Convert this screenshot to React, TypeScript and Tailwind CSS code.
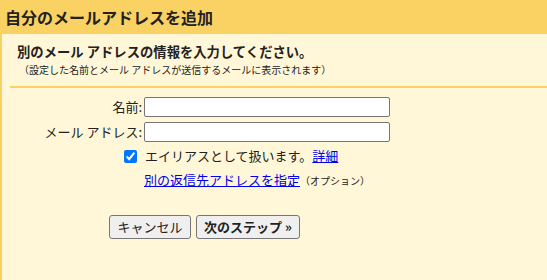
import React from "react";

const font = { fontFamily: '"Noto Sans CJK JP", "Noto Sans", sans-serif' };

export default function App() {
  return (
    <div className="w-[547px] h-[280px] bg-[#fff7d7] text-[#222] overflow-hidden" style={font}>
      <div className="h-[34px] bg-[#fad163] flex items-center pl-[5px]">
        <h1 className="text-[16px] font-bold text-[#222] leading-none">自分のメールアドレスを追加</h1>
      </div>
      <div className="border-l-2 border-[#fad163] h-[246px] pl-[8px]">
        <div className="pl-[7px] pt-[9px]">
          <div className="text-[13.33px] font-bold leading-[18px]">別のメール アドレスの情報を入力してください。</div>
          <div className="text-[10px] leading-[16px] mt-[1px] pl-[2px]">（設定した名前とメール アドレスが送信するメールに表示されます）</div>
        </div>
        <div className="h-[2px] bg-[#fad163] mt-[8px]" />
        <div className="mt-[9px] flex flex-col gap-[5px] text-[13px]">
          <div className="flex items-center h-[20px]">
            <label className="w-[134px] text-right pr-[2px]">名前:</label>
            <input className="w-[246px] h-[20px] border border-[#767676] rounded-[2px] bg-white outline-none" />
          </div>
          <div className="flex items-center h-[20px]">
            <label className="w-[134px] text-right pr-[2px]">メール アドレス:</label>
            <input className="w-[246px] h-[20px] border border-[#767676] rounded-[2px] bg-white outline-none" />
          </div>
        </div>
        <div className="flex items-center mt-[5px] h-[18px] text-[13px] pl-[114px]">
          <input type="checkbox" defaultChecked className="w-[13px] h-[13px] m-0 accent-[#0075ff]" />
          <span className="ml-[8px]">エイリアスとして扱います。</span>
          <a href="#" className="text-[#0000ee] underline">詳細</a>
        </div>
        <div className="flex items-center mt-[6px] h-[18px] pl-[134px]">
          <a href="#" className="text-[13px] text-[#0000ee] underline">別の返信先アドレスを指定</a>
          <span className="text-[10px]">（オプション）</span>
        </div>
        <div className="flex gap-[5px] mt-[26px] pl-[99px]">
          <button className="w-[82px] h-[24px] border border-[#767676] rounded-[3px] bg-[#efefef] text-[13px] text-[#222]">キャンセル</button>
          <button className="w-[104px] h-[24px] border border-[#767676] rounded-[3px] bg-[#efefef] text-[13px] font-bold text-[#222]">次のステップ »</button>
        </div>
      </div>
    </div>
  );
}
